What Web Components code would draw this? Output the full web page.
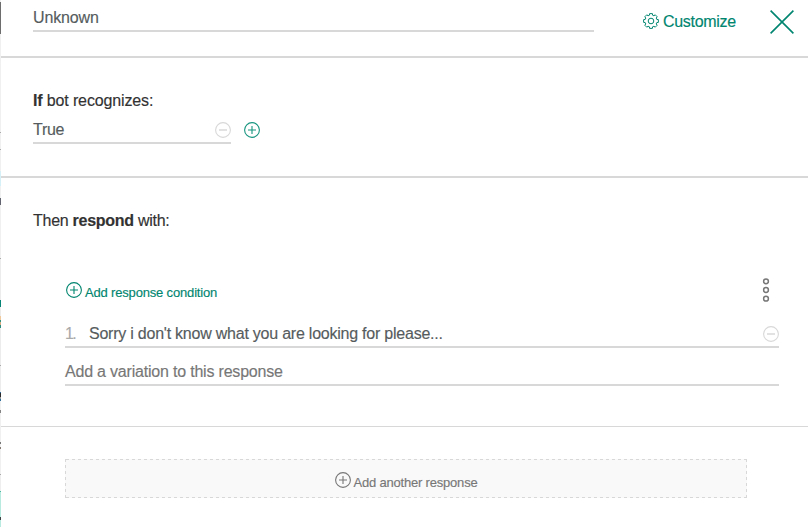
<!DOCTYPE html>
<html lang="en">
<head>
<meta charset="utf-8">
<title>Node editor</title>
<style>
html,body{margin:0;height:527px;overflow:hidden;background:#fff;font-family:"Liberation Sans",Arial,sans-serif;-webkit-text-stroke:.15px}
</style>
</head>
<body>
<node-editor></node-editor>
<script>
const define = (name, html) => customElements.define(name, class extends HTMLElement {
  constructor() {
    super();
    this.attachShadow({mode: 'open'}).innerHTML = html;
  }
});

const GLYPHS = {
  plus: ['0 0 16 16', '<circle cx="8" cy="8" r="7.4"/><path d="M8 4v8M4 8h8"/>'],
  minus: ['0 0 16 16', '<circle cx="8" cy="8" r="7.4"/><path stroke-width="1.5" d="M4 8h8"/>'],
  close: ['0 0 24 24', '<path stroke-width="1.6" d="M.6.6 23.4 23.4M23.4.6.6 23.4"/>'],
  more: ['0 0 8 24', '<g stroke-width="1.5"><circle cx="4" cy="3.3" r="2.4"/><circle cx="4" cy="12" r="2.4"/><circle cx="4" cy="20.7" r="2.4"/></g>']
};

/* Cog outline: eight teeth around a ring. */
const cog = () => {
  let d = '';
  for (let i = 0; i < 8; i++) {
    [[-.27, 6], [-.19, 7.5], [.19, 7.5], [.27, 6]].forEach(([o, r]) => {
      const a = i * Math.PI / 4 + o;
      d += (d ? 'L' : 'M') + (8 + r * Math.sin(a)).toFixed(2) + ' ' + (8 - r * Math.cos(a)).toFixed(2);
    });
  }
  return '<g stroke-width="1"><path stroke-linejoin="round" d="' + d + 'Z"/><circle cx="8" cy="8" r="2.8"/></g>';
};
GLYPHS.cog = ['0 0 16 16', cog()];

customElements.define('ui-icon', class extends HTMLElement {
  constructor() {
    super();
    this.attachShadow({mode: 'open'});
  }
  connectedCallback() {
    const [box, body] = GLYPHS[this.getAttribute('name')];
    this.shadowRoot.innerHTML = `<style>
      :host{display:block;flex:none;width:16px;height:16px}
      svg{display:block;width:100%;height:100%;overflow:visible}
    </style><svg viewBox="${box}" fill="none" stroke="currentColor" stroke-width="1.1">${body}</svg>`;
  }
});

/* Single-line field with an underline and an optional trailing action. */
define('line-field', `<style>
  :host{display:flex;box-sizing:border-box;padding-top:1px;border-bottom:2px solid #d8d8d8;font-size:16px;line-height:20px;color:#565c5e;white-space:nowrap}
  .value{flex:1}
</style><slot name="lead"></slot><div class="value"><slot></slot></div><slot name="action"></slot>`);

define('icon-button', `<style>
  :host{display:flex;white-space:nowrap}
</style><slot name="icon"></slot><span class="label"><slot></slot></span>`);

define('editor-section', `<style>
  :host{display:block;box-sizing:border-box;border-bottom:2px solid #d8d8d8}
</style><slot></slot>`);

/* Sliver of the page that stays visible behind the panel. */
define('backdrop-edge', `<style>
  :host{display:block;background:linear-gradient(to bottom,
    #f0f0f0 0 2px,#6d6d6d 2px 34px,#f0f0f0 34px 132px,#aaa 132px 133px,#f0f0f0 133px 149px,#aaa 149px 150px,
    #f0f0f0 150px 171px,#d5f1f7 171px 186px,#f0f0f0 186px 198px,#62646f 198px 205px,#f0f0f0 205px 258px,#aaa 258px 259px,
    #ececec 259px 300px,#088477 300px 307px,#ececec 307px 316px,#efc99c 316px 320px,#32917f 320px 322px,#d5ac7f 322px 325px,#2a8c80 325px 328px,
    #ececec 328px 365px,#aaa 365px 366px,#ececec 366px 392px,#2f6895 392px 393px,#2b2b2b 393px 397px,#999 397px 399px,#2d6e9b 399px 401px,
    #f0f0f0 401px 410px,#858585 410px 413px,#f0f0f0 413px 442px,#777 442px 444px,#f0f0f0 444px 447px,#837d74 447px 449px,
    #f0f0f0 449px 474px,#aaa 474px 475px,#eee 475px 491px,#48b99e 491px 492px,#b9eadf 492px 517px,#404344 517px 520px,#b9eadf 520px)}
</style>`);

define('node-editor', `<style>
  :host{display:grid;grid-template-columns:1px 1fr;width:808px;height:527px}
  .head{display:flex;height:58px;padding:7px 14px 0 32px}
  .head line-field{width:561px;height:25px;letter-spacing:-.15px}
  .customize{margin:5px 0 0 49px;color:#00856f;font-size:16px;line-height:20px;gap:4px;letter-spacing:-.3px}
  .customize ui-icon{margin-top:1px}
  .close{width:24px;height:24px;margin:3px 0 0 auto;color:#008571}
  .when{height:120px;padding:33px 32px 0}
  .title{font-size:16px;line-height:20px;color:#323232;white-space:nowrap;letter-spacing:-.14px}
  .row{display:flex;gap:13px;margin-top:8px}
  .row line-field{width:198px;height:25px;letter-spacing:-.3px}
  line-field ui-icon{margin-top:2px}
  .add{color:#17957f;margin-top:3px}
  .off{color:#d8d8d8}
  .then{height:249px;padding:33px 29px 0 32px;border-bottom-width:1px}
  .then .title{letter-spacing:-.27px}
  .body{padding-left:32px;margin-top:46px}
  .tools{display:flex;justify-content:space-between;height:26px}
  .condition{margin:6px 0 0 1px;gap:3px;font-size:13px;line-height:20px;color:#00856f;letter-spacing:-.17px}
  .condition ui-icon{margin-top:-1px}
  .tools .more{width:8px;height:24px;margin:1px 9px 0 0;color:#777}
  .item{height:25px;margin-top:20px;letter-spacing:-.23px}
  .item .num{width:24px;color:#aaa;letter-spacing:-1.6px}
  .variation{height:25px;margin-top:13px;color:#777;letter-spacing:-.2px}
  .another{--h:repeating-linear-gradient(90deg,#d8d8d8 0 3px,transparent 3px 6px);--v:repeating-linear-gradient(#d8d8d8 0 3px,transparent 3px 6px);
    display:flex;justify-content:center;width:682px;height:39px;margin:32px 0 0 64px;
    background:var(--h) 1px 0/100% 1px no-repeat,var(--h) 1px 100%/100% 1px no-repeat,var(--v) 0 0/1px 100% no-repeat,var(--v) 100% 0/1px 100% no-repeat,#f9f9f9}
  .another icon-button{margin-top:14px;gap:3px;font-size:13px;line-height:20px;color:#777;letter-spacing:-.2px}
  .another ui-icon{margin-top:-1px}
</style>
<backdrop-edge></backdrop-edge>
<main>
  <editor-section class="head">
    <line-field>Unknown</line-field>
    <icon-button class="customize"><ui-icon slot="icon" name="cog"></ui-icon>Customize</icon-button>
    <ui-icon class="close" name="close"></ui-icon>
  </editor-section>
  <editor-section class="when">
    <div class="title"><b>If</b> bot recognizes:</div>
    <div class="row">
      <line-field>True<ui-icon class="off" slot="action" name="minus"></ui-icon></line-field>
      <ui-icon class="add" name="plus"></ui-icon>
    </div>
  </editor-section>
  <editor-section class="then">
    <div class="title">Then <b>respond</b> with:</div>
    <div class="body">
      <div class="tools">
        <icon-button class="condition"><ui-icon slot="icon" name="plus"></ui-icon>Add response condition</icon-button>
        <ui-icon class="more" name="more"></ui-icon>
      </div>
      <line-field class="item"><span class="num" slot="lead">1.</span>Sorry i don't know what you are looking for please...<ui-icon class="off" slot="action" name="minus"></ui-icon></line-field>
      <line-field class="variation">Add a variation to this response</line-field>
    </div>
  </editor-section>
  <div class="another"><icon-button><ui-icon slot="icon" name="plus"></ui-icon>Add another response</icon-button></div>
</main>`);
</script>
</body>
</html>
